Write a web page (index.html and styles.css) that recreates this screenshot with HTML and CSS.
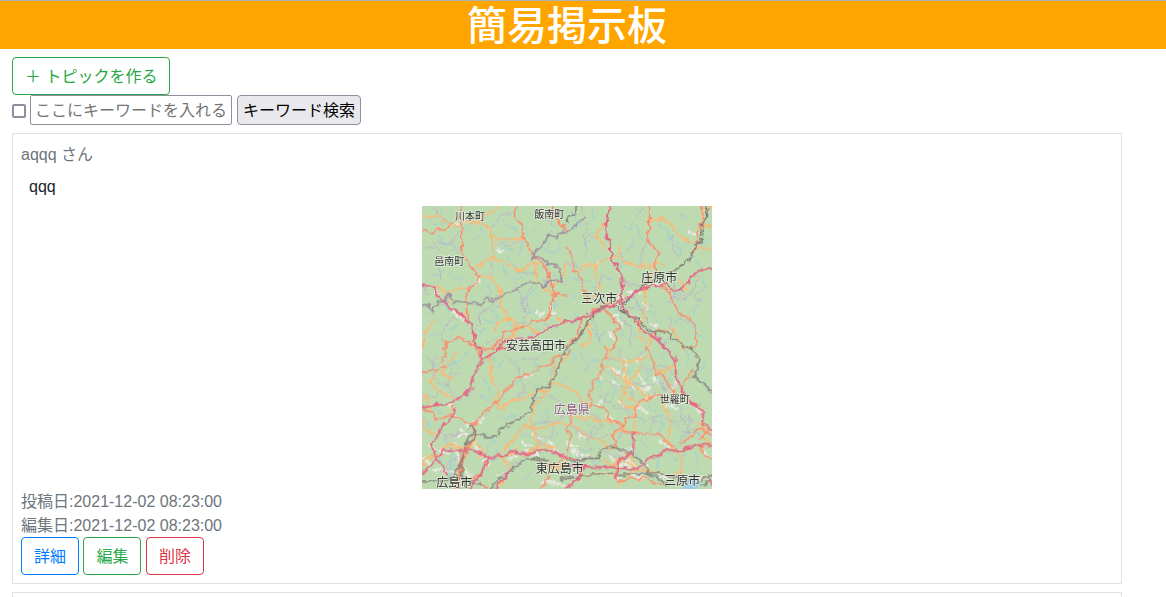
FILE: index.html
```html
<!DOCTYPE html>
<html lang="ja">
<head>
<meta charset="utf-8">
<title>簡易掲示板</title>
<link rel="stylesheet" href="styles.css">
</head>
<body>
<header class="site-header"><h1 class="site-title">簡易掲示板</h1></header>
<main class="board">
  <button class="btn btn-success" type="button">＋ トピックを作る</button>
  <form class="search">
    <input class="search-check" type="checkbox" aria-label="キーワード検索を使う">
    <input class="search-input" type="text" placeholder="ここにキーワードを入れる" aria-label="キーワード">
    <button class="search-button" type="button">キーワード検索</button>
  </form>
  <article class="topic">
    <p class="muted">aqqq さん</p>
    <p class="message">qqq</p>
    <svg class="map" viewBox="0 0 870 849" role="img" aria-label="広島県の地図">
      <defs>
        <filter id="winding" filterUnits="userSpaceOnUse" x="-20" y="-20" width="910" height="890">
          <feTurbulence type="fractalNoise" baseFrequency="0.05" numOctaves="2" seed="4" result="noise"/>
          <feDisplacementMap in="SourceGraphic" in2="noise" scale="22" xChannelSelector="R" yChannelSelector="G"/>
        </filter>
      </defs>
      <rect class="land" width="870" height="849"/>
      <g filter="url(#winding)">
      <!-- north west -->
      <g transform="translate(-6 -6)">
        <path class="river" d="M25 45l20 15 30-3M60 20l10 25 20 8M150 20l5 30-15 30M200 30l-20 25 5 30M180 90l-20 20M250 50l10 20 25 5M275 95l-20 15 5 25M350 70l-20 20-20 5M395 75l-15 35 5 25M360 125l15 20 35-5M420 120l-20 30M60 95l10 20 30 5 15 20M30 210l25 5 15-15M90 205l15 20 25-3M150 240l-10 40M210 120l15 30-10 25M240 130l20 10 20-5M265 160l-15 25 10 25M300 110l5 25-10 20M205 240l5 30-25 20M260 210l20 15 30-5M235 305l-15 20 15 30M290 260l20 20-5 25M345 250l-15 25-30 20M310 320l25 10 15-20M400 210l20 20M410 300l-15 20 10 20M180 330l20 20 25 10M200 370l-20 15M90 270l-15 30 10 25M20 290l15 25-15 20M115 360l-25 15 5 30M55 350l15 20M270 365l25 10 20-10M335 390l20-15M30 400l25-10"/>
        <path class="town" d="M100 325l28 18M165 240l22-12M105 60l30-5M350 325l22 8M240 140l12 6M45 265l25 5M395 312l8 20"/>
        <path class="lane" d="M25 5l35 30 30 20M6 130l30 5 20-20 35 10 15-30 20-25M65 130l-20 30M65 190l-5 35-20 20M125 145l-30-5M285 20l-35 10-25 30-10 20M300 105l-30 20-30-10-25 10M215 165l5 35-15 15M275 175l20 30 55 5M340 155l25 5 20 25M5 245l25 30M110 340l-25 15-20 40 10 35M250 265l-30 20-5 25-30 15-15 50M290 240l15 50 10 40M330 330l-15-50 20-35M365 235l30-10 45 15M280 370l30-20 15-20M230 405l-30 10M380 45l30 25M440 350l-35 20-35-10"/>
        <path class="road" d="M115 65l-30-5-30-25-50 5M125 50l45 10 20-25 30-15 15-15M185 55l30 20 0 45M215 98l45 8 45-2 10-18M155 190l30-5 15-20 30 0 30 15 25 20 30-5 20-20 20 5M215 120l0 45M180 215l25 0 25 25 15 25-5 35 25 40 25 20-10 35M345 175l5 60 30 20 20 15M400 245l25-20 15-45M45 250l35 10 60-10M60 265l20 10 10 20M270 345l-25 5-20 25M280 370l35-5 30 20 25 0 15-10M280 370l5 25-30 15-15 25M120 335l15-10M410 340l30 20M6 430l15-50 20-35"/>
        <path class="trunk" d="M125 5l-5 30 5 50 0 55 15 35 20 20 20 20-15 25-20 15-5 30 0 35 5 30M6 78l30 8 20-10 20 5 20-25M290 5l-10 30 25 25 5 40 25 50 20 20 25 20 10 40 15 40-10 45-15 30-50 10-35 20-40 5-10 25-30 30-40-5-30-10M395 -5l8 35 15 30 22 18M395 270l45 5M385 310l10 25-20 10M70 435l15-20 35-15 40 20"/>
        <path class="border" d="M6 303l20 0 15 18 10-25 20 0 15-28 15 25 35 5 35 0 20 5 10-20 20 5 25-10 30-20 25-10 20-13 30 3 20 10 20-20 35 5-10-45-35-10-20-20-25 3 15-25 20-15 15-30 25 10 20-20 30-5 5-15 30-20"/>
        <path class="motorway" d="M-6 243l47 4 10 28 35 35 35 15 15 25 20 10 12 75M230 436l25-26 30-5 50-5 45-20 25-18 38-10"/>
      </g>
      <!-- north east -->
      <g transform="translate(432 -6)">
        <path class="river" d="M15 20l20 35-5 25M70 50l-25 15M80 20l5 25M90 100l-30 20-5 40M170 70l20 10 10-30M180 140l25-10-5-25M210 65l10 35 20 10M275 60l30 20 10 25M300 110l25-10M340 30l25 15M330 110l15 30-10 20M365 110l-25 30M380 150l20 35M425 100l-25 25M20 220l25 15 25-5M90 220l-10 25M115 215l20 10M180 170l-20 20M5 260l25 20M20 320l15 20-15 20M60 370l25 15 20 30M145 320l20 25-10 20 20 30M190 270l20 20 5 35M240 310l20 20 20-15M310 270l20 10 15-20M340 320l-10 30 20 20M270 345l15 20M370 350l15 30 30 20M400 300l-20 30M410 220l10 30M280 400l20 20M220 370l-15 25M115 380l-15 25M190 400l5 25"/>
        <path class="town" d="M190 265l40 0M245 235l45 5M135 305l30 5M150 335l25 35M190 275l-12 25M235 300l15 20M170 275l-20 20M255 355l20 15M130 390l22 15M370 85l20 10M95 180l15-5M210 340l20 15"/>
        <path class="lane" d="M45 5l20 60-10 25 5 40M130 160l35-15 15 40M85 80l-30 25M230 5l-15 40M250 105l-20 30-5 30 0 20M325 70l-10 50 20 40M5 180l30 5 5 50M70 270l30-25 10-35 25 20M235 240l-35 5-40-10M200 270l30 55 15 30M325 220l0 60 20 10 40-30 10-40M360 270l50 20M90 310l-25 20 25 35 10 45M180 310l45 10 35-15M300 300l30-10 25-20M330 330l35 30 25 5M310 340l10 45-25 35M170 345l30 30-10 45M240 345l20 25M420 250l-35 25"/>
        <path class="road" d="M118 60l-20 15-5 25 25 30M160 130l0 30-30 0-40 25 0 40 15 20-10 25-20 15M40 205l10-20 40 0M160 155l15 25 60 5M230 195l45-20 20 5M250 50l40-5 35 25 15 30 50 15M390 90l15-20 33-8M395 130l45 7M410 60l0-40 25-15M260 205l-25 40 5 35M235 250l5 30-5 60-20 30 20 45M95 315l-20 10-10 45 10 35-30 25M340 230l30 30M310 380l-35 0-20 20-10 35M320 370l15 35 20 30"/>
        <path class="trunk" d="M250 -5l0 80-10 25 25 30 15 20-15 25 5 40M0 130l20 20 0 40 30 40 0 30 20 35M75 320l45-20 45-5M120 320l20 20 20 30-15 15 10 25-20 30M280 240l30 25 20 45 20 25 20 10 20 20 0 65-30 0M400 -5l15 50-25 45 5 35-20 25M0 430l30-30 20-60"/>
        <path class="rail" d="M5 435l50-60 25-45 20-20 45-5 30 25-5-20 30-40 35-30 30-15 45-20 25-10 35-30 15-35 20-20 5-45 15-30-5-35 20-30M160 300l10 25 25 15 20 5 15 20 20 15 20 5 30-5 35 35 45 25M0 55l5-15 25-15 0-30"/>
        <path class="motorway" d="M130 -5l-5 50-10 35 20 40 0 40 20 30 15 35-5 50 10 45 25 20 30 40 40 25 30 30M0 355l40-10 40-20 45-15 40-20 30-15 25-20 40-10 40-5 20 20 30-5 35-45 25-15 38 0"/>
      </g>
      <!-- south west -->
      <g transform="translate(-6 417)">
        <path class="river" d="M95 30l5 25 20 15M140 25l-20 25-20 5M200 30l25 15-10 30M250 50l-15 20M290 55l-10-20M315 80l-15 30-20 5M340 50l20 30M190 100l20 20-5 20M150 130l-15 40M180 155l20 10 15-15M200 210l-20 20M240 210l20 20M260 220l30-10M310 150l-15 20M350 150l-10-30M380 150l20 15M380 190l5 30M405 60l-15 30M440 100l-25 20M30 110l20 20M70 115l15 20M45 190l20 15M15 220l15 30M200 260l5 20M225 275l-15 25M300 240l-10 30M305 265l25 10M370 210l-10 30M410 265l-20 30M360 320l-20 20M25 30l20 30-10 20M110 280l-20 80-5 40M95 300l20 20-25 60M60 340l15 25M280 360l-10 30M330 390l-20 20M190 360l15 20M150 390l30 20M230 320l-10 30"/>
        <path class="town" d="M120 250l30 30M100 275l30-5M105 300l15 60M60 315l25 15M45 375l80 5M30 300l20 20M160 290l25 45M175 230l25-12M320 95l22-10M305 290l40 20M340 270l40 20M400 310l30 25M320 320l40 15M90 180l15 30M195 345l10 20M235 395l35-10M270 340l15-12M10 340l30 25M145 240l20-10M130 370l20 25M370 410l60 10M390 290l15 20"/>
        <path class="lane" d="M45 40l-10 40 20 30 35 15 20 40M6 150l40 5 40-40 5-30M80 40l20 45 30 0M10 30l50 40 40-10M255 30l40 40 0 30M380 20l-35 25-45-5M160 230l-25 30-35 10-35-5-15-20M120 240l-10 30-25 10M75 270l10 25M300 105l20 30-30 20M330 250l30-20 45 0 35-20M320 240l30 30 10 40M400 240l-10 35-25 10M200 300l5 35 25 10M340 160l45-10 35 20M45 340l60 50M60 385l25-35 60-20M330 320l-20 30-50 10"/>
        <path class="road" d="M205 20l5 35 10 15-15 20 20 20 10 45M240 190l25-15 25-15 25 0 25-15 45-10M220 160l20 30M440 40l-35 25-10 50 45 10M385 125l-15 30-30 25-5 60 10 35 5 25 25 20M245 320l35-35 35-45 35 15 35-10 25-15 30 10M15 150l20 35-5 15M50 85l-20 20 20 30 50 25M75 55l-10 30 35 20M60 310l25-10 50 10 5 20M65 330l-40 5-20 30M170 300l20 20-15 15M230 330l35 20 0 30-20 40M310 330l60-30 40 10M290 310l-20 20M150 305l20-30M110 20l-20 30M385 360l30 10 25-20M6 225l15 35 25 5"/>
        <path class="trunk" d="M-4 81l45-6 10 5 25-20M80 -5l-5 40-15 15M165 5l15 20 10 25M240 160l25-30 25-35 35-5 35-25 30-5 15-25 35-5 15-15M240 160l-35 35-30 20-10 25-50-20-15-10-5-30M6 190l35 15 5 20 30-10 25-5M160 240l5 35-25 35-10 20-15 60-10 45M125 315l-10 120M145 310l-25 80M130 330l-15 65M385 360l0 40-25 35M210 330l-15 45-40 30M440 330l-30 30-25 0M180 415l20 15"/>
        <path class="rail" d="M440 5l-15 35-15 40-20 45-25 0-25 35-5 35-40 30-45 20-20 25-20 10-25-10-20-10-20 15-15 60-5 50 10 45M150 245l15 3 5 25-30 25-20 65-20 25-20 20-85 0M100 390l30 15 60 15M210 435l30-35 30-20 30-25 30-15 55 5"/>
        <path class="motorway" d="M165 -5l20 20 0 30-20 40-15 50-40 30-40 12-74 12M175 50l20-10 25-15 20-16 30-2M105 190l-5 25-35 30-10 25-20 30 15 45 20 15 10 25M-4 393l40-33 30-40 30-7 60 5 30 5 15 15 50-5 25-15 40 10 40-10 30-5 45 20 44 13M205 340l-10 30-25 30-25 35M265 380l-20 30-25 30"/>
      </g>
      <!-- south east -->
      <g transform="translate(432 417)">
        <path class="river" d="M10 15l20 30M45 20l10 25M75 40l-15 40M80 50l20-10M90 100l15 30M130 80l20 25M150 130l-15 30M180 60l10 30M195 110l15 20M225 60l20 30M255 75l-15 30M270 90l15 30M280 40l35-25M310 100l-15 30M360 15l10 35M380 70l-10 30M420 50l-20 30M415 110l10 25M350 210l20 20M270 210l20 30-10 30M220 220l20 20M130 220l15 30M60 225l20 25M35 160l20 15M30 260l40 20M20 300l25 20 30-5M70 340l20 20M200 310l20 25M280 340l-10 30M300 320l30 25M360 330l-15 30M390 320l5 30M400 370l-20 20M160 240l15 20M220 280l20 20M390 260l20 20M250 180l20 20M330 180l20 15M180 170l-20 20M5 340l20 25M125 350l20 20M210 370l30 20M340 280l20-15"/>
        <path class="town" d="M130 70l30 10M175 90l25 40M160 170l20 15M215 90l30 35M220 135l35-5M100 90l20 20M170 45l20 20M265 100l15 20M5 295l35 15M20 320l45 15M135 330l25 40M150 355l50 10M180 340l25 20M240 160l40-10M300 180l30 10M380 180l25 20M200 390l30 10M115 390l50 10M280 390l30 15M380 400l55 0M10 390l35 20M165 325l30-15M230 350l20 15M215 185l30 20M95 175l20-10M330 110l-10 30M140 110l15 12M285 290l25 15M210 50l20-20M40 270l20 10M415 320l15 20M120 210l20 15"/>
        <path class="lane" d="M110 100l35 20 50 10 10 40M100 150l40 35 40 5 25 25M125 40l55 15-20 35M155 10l15 30M220 70l40 0 40-10 20 30M200 110l30 15 40-15 50 35M70 205l30 15 10 30-35 25M210 215l30 10 50-15 30 20 50-10 35 20M265 220l-10 35-30 20M310 220l40 40 35 5M340 190l10 40 55 40M85 240l-20 50M55 260l45 20 35-10M10 240l50 35 15 40M100 310l50 25 40-25M270 140l-25 30-30 0M240 350l-20 40M45 325l-25 40M240 10l-30 30M370 210l-5 60-30 20M130 140l-20 40M290 110l10 60M175 240l-15 40M340 110l-25 20"/>
        <path class="road" d="M120 5l25 35 30 10 45-5 25-10M175 50l0 35 15 30 35 25 25 20-25 15-45-15M120 60l25 25 40 25 30-25 5-45M190 115l-15 25-15 25 20 20 25 0 0 80M270 90l30-20 30-10 0 30M285 160l20 40 10 40-10 45 20 30 20 15 0 55 10 25M5 130l25 10 15 25 25 20M25 215l50 5 50 10 50 10M10 230l40 35 50 20 25 15M130 360l35-15 35 15-10 30-35 30M150 340l0 60M120 350l30 15M205 375l40 0 30 10M395 235l35 25M435 300l-30-30M140 265l20-5 25-10M0 180l25 15M175 325l20 15 20 25M310 390l35-5M40 395l80-10 30 15"/>
        <path class="trunk" d="M120 5l5 30-15 10-5 35-25 35-10 25 5 35 50 20 0 25 50 25-30 15-5 10 10 30-20 15M240 5l10 15 15 50 10 20 20 0 10 30 20 10 0 20M285 150l-20 0-10 15-30 0-15 20 0 30-30 0-5 45 65 5 50 10 15 20 20 10M380 75l-20 30-15 40M440 270l-45-20-20 25-30 20M25 190l-20 60 10 30-10 40M440 340l-30-10 0-30M400 280l20-15 15-20M75 180l-15 10M155 410l40-10 50 0 40 20M5 425l45-35"/>
        <path class="rail" d="M375 5l25 40-15 50 35 25 20 30M0 345l30 5 30-10 40 0 0-20 20-15 40 5 50 25 25 20 10 30 40 20 25 15M-18 403l98-13 120-3 70-3 25 5 60 15 45 5 40-25M405 420l40-15"/>
        <path class="motorway" d="M265 -35l30 38 30 32 5 55 20 50 30 40 25 10 10 20-5 30 38 12M0 362l60 3 90 3 60 5 20-15 10-15 35-10 25-20 45 7 30-20 65 0 40-12M205 260l-5 65-40 20-10 55M345 145l20 15 30 25M0 430l40-30 10-40M440 420l-10-20"/>
        <path class="water" d="M350 430q10-35 45-30l10 15-10 20h-40z"/>
      </g>
      </g>
      <g class="places">
        <text class="small" x="144" y="43">川本町</text>
        <text class="small" x="382" y="36">飯南町</text>
        <text class="small" x="82" y="176">邑南町</text>
        <text x="712" y="227">庄原市</text>
        <text x="532" y="291">三次市</text>
        <text x="342" y="433">安芸高田市</text>
        <text class="small" x="758" y="592">世羅町</text>
        <text class="region" x="449" y="624">広島県</text>
        <text x="413" y="800">東広島市</text>
        <text x="97" y="844">広島市</text>
        <text x="781" y="838">三原市</text>
      </g>
    </svg>
    <p class="muted">投稿日:2021-12-02 08:23:00</p>
    <p class="muted">編集日:2021-12-02 08:23:00</p>
    <div class="actions">
      <button class="btn btn-primary" type="button">詳細</button>
      <button class="btn btn-success" type="button">編集</button>
      <button class="btn btn-danger" type="button">削除</button>
    </div>
  </article>
  <article class="topic"></article>
</main>
</body>
</html>
```
FILE: styles.css
```css
*, *::before, *::after { box-sizing: border-box; }
body {
  margin: 0;
  height: 100vh;
  overflow: hidden;
  background: #fff;
  color: #212529;
  font-family: "Liberation Sans", "Noto Sans CJK JP", sans-serif;
  font-size: 16px;
  line-height: 24px;
}
h1 { margin: 0; }
p { margin: 0; padding-top: 2px; line-height: 22px; }
button, input { font: inherit; }
.site-header {
  border-top: 1px solid #b1b1b3;
  padding: 0 32px 4px 0;
  background: #ffa500;
  color: #fff;
  text-align: center;
}
.site-title {
  font-family: "Noto Sans CJK JP", sans-serif;
  font-size: 40px;
  font-weight: 500;
  line-height: 44px;
}
.board { padding: 8px 44px 0 12px; }
.btn {
  display: block;
  height: 38px;
  padding: 7px 12px 5px;
  border: 1px solid;
  border-radius: 4px;
  background: transparent;
  line-height: 24px;
}
.btn-success { color: #28a745; }
.btn-primary { color: #007bff; }
.btn-danger { color: #dc3545; }
.search { display: flex; align-items: center; margin-bottom: 8px; }
.search-check {
  appearance: none;
  width: 14px;
  height: 14px;
  margin: 2px 4px 0 0;
  border: 2px solid #8f8f9d;
  border-radius: 2px;
  background: #fff;
}
.search-input {
  width: 202px;
  height: 30px;
  margin-right: 5px;
  padding: 2px 4px 0;
  border: 1px solid #8f8f9d;
  border-radius: 2px;
  background: #fff;
}
.search-input::placeholder { color: #757575; opacity: 1; }
.search-button {
  height: 30px;
  padding: 2px 5px 0;
  border: 1px solid #8f8f9d;
  border-radius: 4px;
  background: #e9e9ed;
  color: #000;
}
.topic { margin-bottom: 8px; padding: 8px; border: 1px solid #dee2e6; }
.muted { color: #6c757d; }
.message { padding: 10px 8px 8px; }
.map { display: block; width: 290px; height: 283px; margin: 0 auto; }
.map path { fill: none; stroke-linejoin: round; stroke-linecap: round; }
.map .land { fill: #bddab1; }
.map .river { stroke: #9dcbdc; stroke-width: 3; }
.map .town { stroke: #e9eadf; stroke-width: 11; stroke-dasharray: 3 13 1 12; }
.map .lane { stroke: #b0afb8; stroke-width: 3; filter: drop-shadow(0 0 2px #e8ecdf); }
.map .road { stroke: #f8b56c; stroke-width: 5; filter: drop-shadow(0 0 2px #eee9d5); }
.map .trunk { stroke: #f58b68; stroke-width: 5; filter: drop-shadow(0 0 2px #f0e4d5); }
.map .border { stroke: #9c8c9d; stroke-width: 5; }
.map .rail { stroke: #807773; stroke-width: 4; }
.map .motorway { stroke: #e46684; stroke-width: 6; }
.map .water { fill: #9ccfe5; }
.places {
  fill: #333;
  stroke: #f2f5ec;
  stroke-width: 5;
  stroke-opacity: .7;
  paint-order: stroke;
  font-family: "Noto Sans CJK JP", sans-serif;
  font-size: 36px;
  text-anchor: middle;
}
.places .small { font-size: 30px; }
.places .region { fill: #8d618b; }
.actions .btn { display: inline-block; vertical-align: top; }
```
